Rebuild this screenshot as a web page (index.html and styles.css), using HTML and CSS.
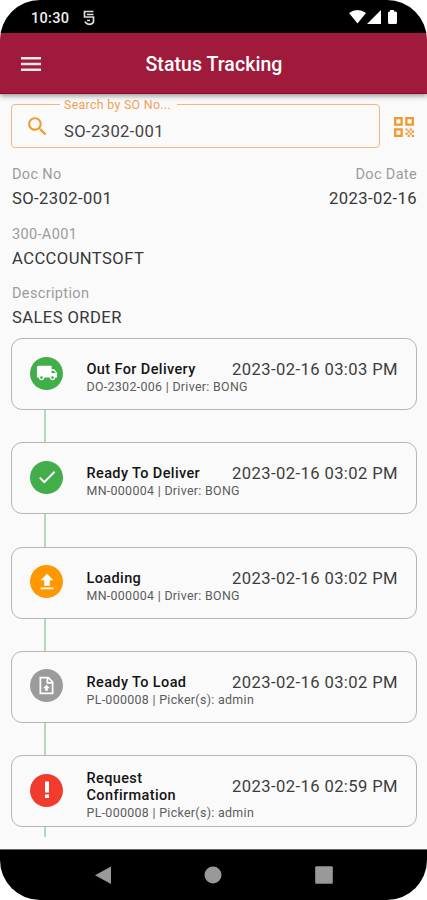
FILE: index.html
```html
<!DOCTYPE html>
<html lang="en">
<head>
<meta charset="utf-8">
<title>Status Tracking</title>
<link rel="stylesheet" href="styles.css">
</head>
<body>
<div class="phone">
  <div class="statusbar">
    <span class="clock">10:30</span>
    <svg class="notif" width="12" height="16" viewBox="0 0 12 16" fill="none" stroke="#ddd" stroke-width="1.7"><path d="M10.500 1.500H1.500V7H10.500V11.500Q10 14 6 14.300Q3 14 2 11.500M4 4.500h6.500M4 10.500h3"/></svg>
    <svg class="signals" width="50" height="16" viewBox="0 0 50 16" fill="#fff"><path d="M0 4Q8.500 -2 17 4L8.500 14.500Z"/><path d="M18 15L32 1V15Z"/><path d="M41 1h4v1.500h1.500q1.500 0 1.500 1.500v9.500q0 1.500-1.500 1.500h-6q-1.500 0-1.500-1.500V4q0-1.500 1.500-1.500H41Z"/></svg>
  </div>
  <header class="appbar">
    <svg class="menu" width="20" height="14" viewBox="0 0 20 14" fill="#fbe9ec"><path d="M0 0h20v2.600H0zM0 5.700h20v2.600H0zM0 11.400h20v2.600H0z"/></svg>
    <h1>Status Tracking</h1>
  </header>
  <main>
    <div class="search-row">
      <div class="search">
        <span class="legend">Search by SO No...</span>
        <svg width="25" height="25" viewBox="0 0 24 24" fill="#f2992e"><path d="M15.500 14h-.79l-.28-.27C15.410 12.590 16 11.110 16 9.500 16 5.910 13.090 3 9.500 3S3 5.910 3 9.500 5.910 16 9.500 16c1.610 0 3.090-.59 4.230-1.570l.27.280v.79l5 4.990L20.490 19zm-6 0C7.010 14 5 11.990 5 9.500S7.010 5 9.500 5 14 7.010 14 9.500 11.990 14 9.500 14z"/></svg>
        <span class="query">SO-2302-001</span>
      </div>
      <svg class="qr" width="20" height="20" viewBox="0 0 20 20" fill="none" stroke="#f2992e" stroke-width="2.300"><path d="M1.200 1.200h6.400v6.400H1.200zM12.400 1.200h6.400v6.400h-6.400zM1.200 12.400h6.400v6.400H1.200z"/><path stroke="none" fill="#f2992e" d="M11.500 11.500h2.100v2.100h-2.100zM15.700 11.500h2.100v2.100h-2.100zM13.600 13.600h2.100v2.100h-2.100zM17.800 13.600H20v2.100h-2.200zM11.500 15.700h2.100v2.100h-2.100zM15.700 15.700h2.100v2.100h-2.100zM13.600 17.800h2.100V20h-2.100zM17.800 17.800H20V20h-2.200z"/></svg>
    </div>
    <section class="info">
      <div class="pair"><div><div class="label">Doc No</div><div class="value">SO-2302-001</div></div>
      <div class="right"><div class="label">Doc Date</div><div class="value">2023-02-16</div></div></div>
      <div><div class="label">300-A001</div><div class="value">ACCCOUNTSOFT</div></div>
      <div><div class="label">Description</div><div class="value">SALES ORDER</div></div>
    </section>
    <section class="timeline">
      <article class="card">
        <span class="badge green"><svg width="22" height="22" viewBox="0 0 24 24" fill="#fff"><path d="M20 8h-3V4H3c-1.100 0-2 .9-2 2v11h2c0 1.660 1.340 3 3 3s3-1.340 3-3h6c0 1.660 1.340 3 3 3s3-1.340 3-3h2v-5l-3-4zM6 18.500c-.83 0-1.500-.67-1.500-1.500s.67-1.500 1.500-1.500 1.500.67 1.500 1.500-.67 1.500-1.500 1.500zm13.500-9l1.960 2.500H17V9.500h2.500zm-1.500 9c-.83 0-1.500-.67-1.500-1.500s.67-1.500 1.500-1.500 1.500.67 1.500 1.500-.67 1.500-1.500 1.500z"/></svg></span>
        <div class="text"><div class="head"><h2>Out For Delivery</h2><time>2023-02-16 03:03 PM</time></div><p>DO-2302-006 | Driver: BONG</p></div>
      </article>
      <div class="line"></div>
      <article class="card">
        <span class="badge green"><svg width="22" height="22" viewBox="0 0 24 24" fill="#fff"><path d="M9 16.170L4.830 12l-1.420 1.410L9 19 21 7l-1.410-1.410z"/></svg></span>
        <div class="text"><div class="head"><h2>Ready To Deliver</h2><time>2023-02-16 03:02 PM</time></div><p>MN-000004 | Driver: BONG</p></div>
      </article>
      <div class="line"></div>
      <article class="card">
        <span class="badge orange"><svg width="22" height="22" viewBox="0 0 24 24" fill="#fff"><path d="M9 16h6v-6h4l-7-7-7 7h4v6zM5 18h14v2H5z"/></svg></span>
        <div class="text"><div class="head"><h2>Loading</h2><time>2023-02-16 03:02 PM</time></div><p>MN-000004 | Driver: BONG</p></div>
      </article>
      <div class="line"></div>
      <article class="card">
        <span class="badge grey"><svg width="21" height="21" viewBox="0 0 24 24" fill="none" stroke="#fff" stroke-width="2"><path d="M5 3h9l5 5v13H5zM13 3.500V9h5.500"/><path stroke="none" fill="#fff" d="M12 11l4 4h-2.500v3h-3v-3H8z"/></svg></span>
        <div class="text"><div class="head"><h2>Ready To Load</h2><time>2023-02-16 03:02 PM</time></div><p>PL-000008 | Picker(s): admin</p></div>
      </article>
      <div class="line"></div>
      <article class="card">
        <span class="badge red"><svg width="22" height="22" viewBox="0 0 22 22" fill="#fff"><path d="M9 2.500h4v11H9zM9 15.500h4v3.500H9z"/></svg></span>
        <div class="text"><div class="head"><h2>Request<br>Confirmation</h2><time>2023-02-16 02:59 PM</time></div><p>PL-000008 | Picker(s): admin</p></div>
      </article>
      <div class="line tail"></div>
    </section>
  </main>
  <nav class="navbar">
    <svg width="16" height="18" viewBox="0 0 16 18"><path fill="#999" d="M16 .5v17.500L0 9.250z"/></svg>
    <svg width="18" height="18" viewBox="0 0 18 18"><circle fill="#999" cx="9" cy="9" r="8.500"/></svg>
    <svg width="18" height="18" viewBox="0 0 18 18"><rect fill="#999" x=".2" y=".2" width="17.600" height="17.600" rx="1"/></svg>
  </nav>
</div>
</body>
</html>
```
FILE: styles.css
```css
* { box-sizing: border-box; }
body { margin: 0; background: #fff; font-family: Roboto, sans-serif; }
h1, h2, p { margin: 0; }
svg { display: block; flex: none; }
.phone { width: 427px; height: 900px; display: flex; flex-direction: column; overflow: hidden; border-radius: 40px; background: #fafafa; }
.statusbar { height: 33px; flex: none; background: #000; display: flex; align-items: center; padding: 3px 28px 0 31px; }
.clock { color: #eee; font-size: 14.500px; font-weight: 500; width: 52px; letter-spacing: .3px; }
.signals { margin-left: auto; margin-top: -2px; }
.appbar { height: 61px; flex: none; background: #9f1a3b; border-bottom: 1px solid #8b0a25; box-shadow: 0 2px 5px rgba(0,0,0,.4); display: flex; align-items: center; padding: 1px 0 0 21px; position: relative; z-index: 1; }
.appbar h1 { width: 346px; padding-top: 1px; text-align: center; color: #fff; font-size: 19.500px; font-weight: 500; letter-spacing: .06px; }
main { flex: 1; padding: 10px 10px 0 11px; }
.search-row { display: flex; align-items: center; justify-content: space-between; padding-right: 3px; height: 44px; }
.search { width: 369px; height: 44px; border: 1px solid #f6b77b; border-radius: 4px; display: flex; align-items: center; padding-left: 13px; position: relative; }
.legend { position: absolute; left: 48px; top: -8px; padding: 0 6px 0 4px; background: #fafafa; color: #f0a057; font-size: 12.400px; line-height: 16px; letter-spacing: .3px; }
.query { color: #444; font-size: 16.600px; margin: 11px 0 0 14px; letter-spacing: .38px; }
.qr { margin-top: 2px; }
.info { padding: 17px 0 0 1px; }
.info > div { height: 59.600px; }
.pair { display: flex; justify-content: space-between; }
.right { text-align: right; }
.label { color: #9c9c9c; font-size: 14.500px; line-height: 20px; letter-spacing: .35px; }
.value { color: #373737; font-size: 16.600px; line-height: 28px; letter-spacing: .42px; }
.timeline { margin-top: -5.600px; }
.card { height: 72px; border: 1px solid #b5b5b5; border-radius: 11px; display: flex; align-items: center; padding: 0 18px; }
.badge { width: 33px; height: 33px; border-radius: 50%; display: flex; align-items: center; justify-content: center; flex: none; margin-top: -2px; }
.green { background: #42ae49; }
.orange { background: #ff9800; }
.grey { background: #9b9b9b; }
.red { background: #f23b2f; }
.text { flex: 1; margin-left: 23.500px; padding-top: 8px; }
.head { display: flex; justify-content: space-between; align-items: center; }
h2 { font-size: 14.500px; line-height: 17px; font-weight: 500; color: #141414; letter-spacing: .38px; }
time { color: #3d3d3d; font-size: 16.600px; line-height: 17px; letter-spacing: .4px; white-space: nowrap; }
.card p { color: #5c5c5c; font-size: 12.400px; line-height: 17px; letter-spacing: .32px; }
.line { width: 2px; height: 32.250px; margin-left: 33px; background: #b3dab5; }
.tail { height: 10px; }
.navbar { height: 51px; flex: none; background: #000; border-top: 1px solid #666; display: flex; justify-content: space-between; align-items: center; padding: 0 94px 0 95px; }
```
